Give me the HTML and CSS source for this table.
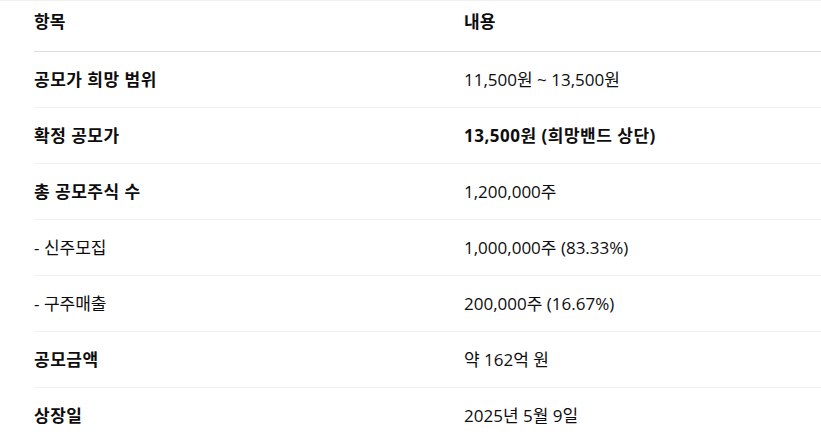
FILE: index.html
```html
<!DOCTYPE html>
<html lang="ko">
<head>
<meta charset="utf-8">
<link rel="stylesheet" href="styles.css">
</head>
<body>
<div class="page">
  <table class="ipo">
    <thead>
      <tr><th>항목</th><th>내용</th></tr>
    </thead>
    <tbody>
      <tr><td class="k">공모가 희망 범위</td><td>11,500원 ~ 13,500원</td></tr>
      <tr><td class="k">확정 공모가</td><td class="k">13,500원 (희망밴드 상단)</td></tr>
      <tr><td class="k">총 공모주식 수</td><td>1,200,000주</td></tr>
      <tr><td>- 신주모집</td><td>1,000,000주 (83.33%)</td></tr>
      <tr><td>- 구주매출</td><td>200,000주 (16.67%)</td></tr>
      <tr><td class="k">공모금액</td><td>약 162억 원</td></tr>
      <tr class="last"><td class="k">상장일</td><td>2025년 5월 9일</td></tr>
    </tbody>
  </table>
</div>
</body>
</html>
```
FILE: styles.css
```css
html, body {
  margin: 0;
  padding: 0;
  background: #fff;
  overflow: hidden;
}
body {
  font-family: "Open Sans", "Noto Sans CJK KR", sans-serif;
  font-size: 17px;
  color: #0d0d0d;
}
.page {
  border-top: 1px solid #f0f0f0;
  padding-left: 34px;
  width: 900px;
}
.ipo {
  border-collapse: collapse;
  width: 860px;
  table-layout: fixed;
}
.ipo th, .ipo td {
  text-align: left;
  padding: 0;
  line-height: 24px;
  vertical-align: middle;
}
.ipo th {
  font-weight: 700;
  padding: 9px 0 17px;
  border-bottom: 1px solid #dcdcdc;
}
.ipo td {
  padding: 16px 0 15px;
  border-bottom: 1px solid #f0f0f0;
}
.ipo tr.last td {
  border-bottom: none;
}
.ipo .k {
  font-weight: 700;
  letter-spacing: 0.5px;
}
```
